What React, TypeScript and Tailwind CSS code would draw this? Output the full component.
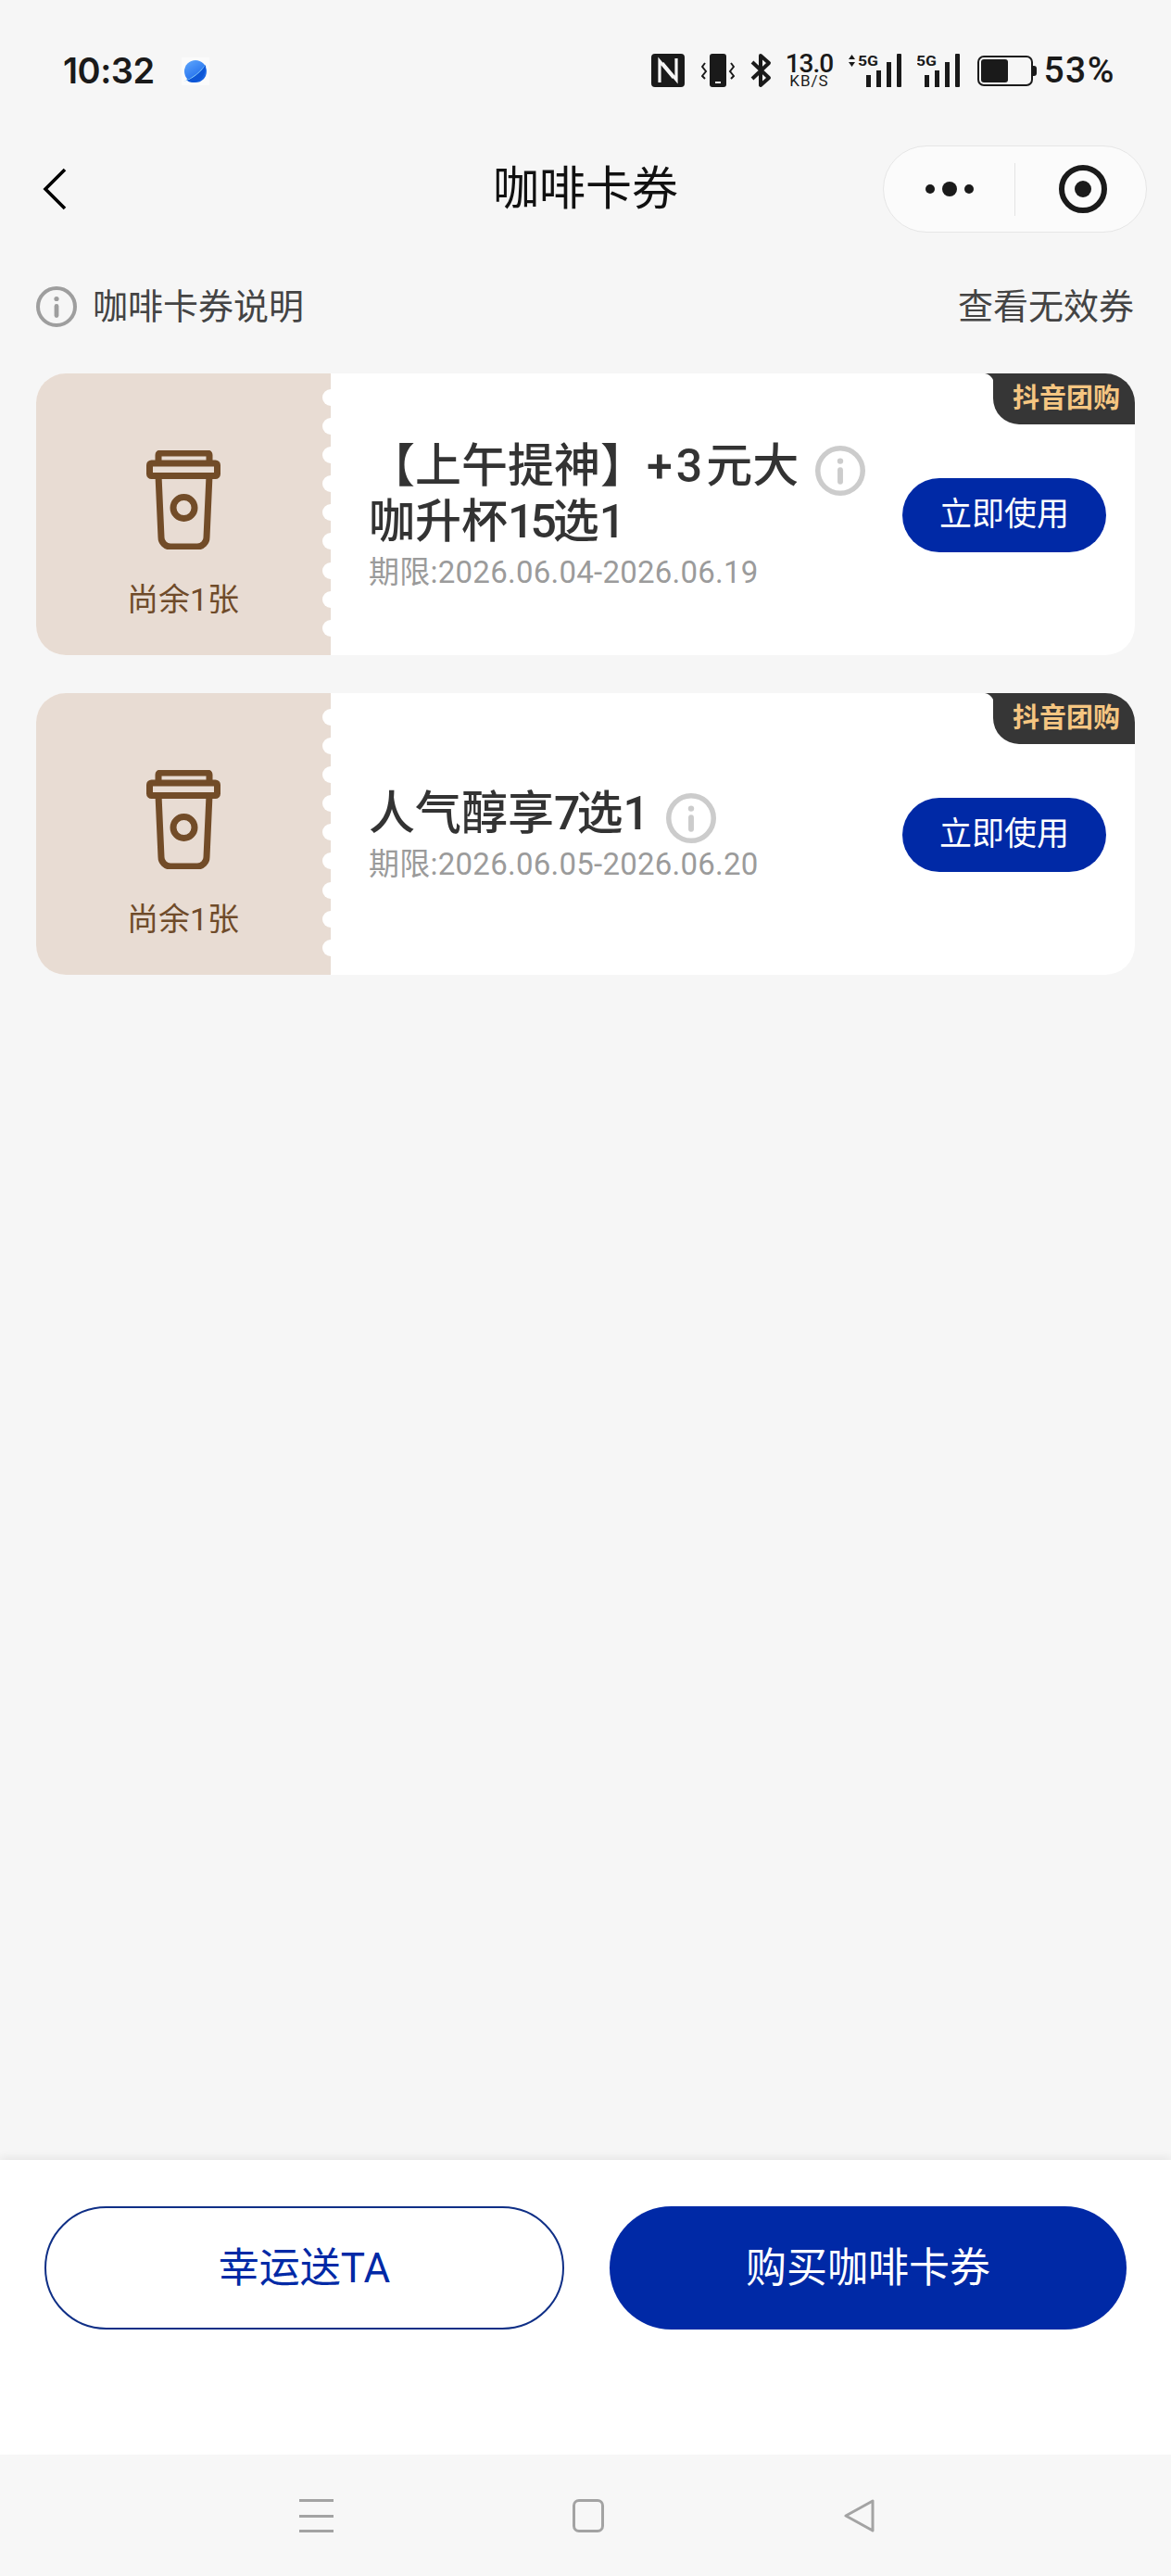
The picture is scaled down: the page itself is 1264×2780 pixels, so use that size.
import { useId, type ReactNode } from "react";

const BLUE = "bg-[#0029a6]";

function Planet() {
  const id = useId();
  return (
    <svg width="30" height="30" viewBox="0 0 30 30" className="ml-[29px] mt-[1px]">
      <defs>
        <linearGradient id={id} x1="0.2" y1="0" x2="0.8" y2="1">
          <stop offset="0" stopColor="#5aa2fb" />
          <stop offset="0.6" stopColor="#2f7bf0" />
          <stop offset="1" stopColor="#0a55d8" />
        </linearGradient>
      </defs>
      <rect x="-2" y="-2" width="34" height="34" rx="6" fill="#fbfbfb" />
      <circle cx="15" cy="15" r="12" fill={`url(#${id})`} />
      <path d="M5 24 C12 22 21 16 26 8 C27 17 21 27 12 27 C9 27 7 26 5 24Z" fill="#0d56d6" />
      <path d="M2 26 C10 24 20 18 27 6 C21 15 12 22 2 26Z" fill="#8fd4fb" />
    </svg>
  );
}

function NfcIcon() {
  return (
    <svg width="36" height="36" viewBox="0 0 36 36">
      <rect width="36" height="36" rx="4" fill="#1a1a1a" />
      <path d="M9 31V8L24 26M27 5V28L12 10" fill="none" stroke="#f6f6f6" strokeWidth="3.2" />
    </svg>
  );
}

function VibrateIcon() {
  return (
    <svg width="36" height="36" viewBox="0 0 36 36">
      <rect x="9" y="0" width="18" height="36" rx="3" fill="#1a1a1a" />
      <rect x="15" y="30" width="6" height="2" fill="#f6f6f6" />
      <path d="M4 10L1 14L5 19L1 24L4 27M32 10L35 14L31 19L35 24L32 27" fill="none" stroke="#1a1a1a" strokeWidth="2" />
    </svg>
  );
}

function BluetoothIcon() {
  return (
    <svg width="23" height="38" viewBox="0 0 23 38">
      <path d="M2 10L20 27L11 35V3L20 11L2 28" fill="none" stroke="#1a1a1a" strokeWidth="4" strokeLinejoin="round" />
    </svg>
  );
}

function Signal({ arrows }: { arrows?: boolean }) {
  const ox = arrows ? 12 : 0;
  return (
    <svg width={arrows ? 59 : 47} height="36" viewBox={`0 0 ${arrows ? 59 : 47} 36`}>
      {arrows && <path d="M1 6L4.5 1L8 6ZM1 9L4.5 14L8 9Z" fill="#1a1a1a" />}
      <text x={ox - 1} y="13" fontSize="15" fontWeight="700" fill="#1a1a1a" fontFamily="Roboto, sans-serif" textLength="22" lengthAdjust="spacingAndGlyphs">
        5G
      </text>
      <rect x={ox + 8} y="23" width="5" height="13" fill="#1a1a1a" />
      <rect x={ox + 19} y="18" width="5" height="18" fill="#1a1a1a" />
      <rect x={ox + 30} y="9" width="5" height="27" fill="#1a1a1a" />
      <rect x={ox + 41} y="0" width="5" height="36" rx="1" fill="#1a1a1a" />
    </svg>
  );
}

function Battery() {
  return (
    <svg width="64" height="33" viewBox="0 0 64 33">
      <rect x="1" y="1" width="58" height="31" rx="6" fill="none" stroke="#1a1a1a" strokeWidth="2" />
      <rect x="4" y="4" width="29" height="25" rx="3" fill="#1a1a1a" />
      <path d="M60 11h1a3 3 0 0 1 3 3v5a3 3 0 0 1-3 3h-1Z" fill="#1a1a1a" />
    </svg>
  );
}

function InfoIcon({ size, color, stroke }: { size: number; color: string; stroke: number }) {
  return (
    <svg width={size} height={size} viewBox="0 0 44 44" className="inline-block align-middle">
      <circle cx="22" cy="22" r={22 - stroke / 2} fill="none" stroke={color} strokeWidth={stroke} />
      <circle cx="22" cy="13.5" r="2.6" fill={color} />
      <rect x="19.6" y="19" width="4.8" height="15" rx="2.4" fill={color} />
    </svg>
  );
}

function CupIcon() {
  return (
    <svg width="80" height="107" viewBox="0 0 80 107" fill="none" stroke="#724c28" strokeWidth="7" strokeLinejoin="round">
      <path d="M13 14V5a2 2 0 0 1 2-2H66a2 2 0 0 1 2 2V14" />
      <rect x="3.5" y="14" width="73" height="13.5" rx="2" />
      <path d="M13 27L16 94a10 10 0 0 0 10 10H55a10 10 0 0 0 10-10L68 27" />
      <circle cx="40.5" cy="62" r="11.5" />
    </svg>
  );
}

function Scallops() {
  return (
    <div className="absolute right-[-9px] top-[17px] flex flex-col gap-[13.1px]">
      {Array.from({ length: 9 }).map((_, i) => (
        <div key={i} className="w-[18px] h-[18px] rounded-full bg-white" />
      ))}
    </div>
  );
}

// the digits in the titles are narrower than Roboto's
function Num({ children }: { children: ReactNode }) {
  return <span className="tracking-[-4px]">{children}</span>;
}

function CouponCard({ title, rest, date }: { title: ReactNode; rest?: ReactNode; date: string }) {
  return (
    <div className="relative flex h-[304px] rounded-[32px] overflow-hidden bg-white">
      <div className="relative w-[318px] shrink-0 bg-[#e8dcd3] flex flex-col items-center pt-[83px] pr-[1px]">
        <CupIcon />
        <div className="mt-[30px] text-[34px] leading-[48px] text-[#6f4b2a]">尚余1张</div>
        <Scallops />
      </div>
      <div className="flex-1 flex items-center pl-[41px]">
        <div className="w-[546px] mt-[5px]">
          <div className="text-[50px] leading-[60px] font-medium text-[#333333]">
            {title}
            <span className="inline-block ml-[18px] my-[-10px] align-middle relative top-[-2px]">
              <InfoIcon size={54} color="#cccccc" stroke={4.5} />
            </span>
            {rest && <br />}
            {rest}
          </div>
          <div className="text-[33px] leading-[50px] tracking-[0.25px] text-[#9b9b9b]">{date}</div>
        </div>
        <div className={`w-[220px] h-[80px] ml-[30px] mt-[2px] rounded-full ${BLUE} flex items-center justify-center text-[35px] text-white`}>
          立即使用
        </div>
      </div>
      <div className="absolute right-0 top-0 w-[153px] h-[55px] pl-[21px] flex items-center rounded-bl-[28px] bg-[#363636] text-[29px] font-bold text-[#f5c681]">
        <svg width="10" height="12" viewBox="0 0 10 12" className="absolute left-[-9px] top-0" fill="#363636">
          <path d="M0 0H10V12C10 6 6 1 0 0Z" />
        </svg>
        抖音团购
      </div>
    </div>
  );
}

export default function App() {
  return (
    <div className="w-[1264px] h-[2780px] flex flex-col bg-[#f6f6f6] font-['Roboto','Noto_Sans_CJK_SC',sans-serif]">
      <div className="h-[157px] flex justify-between items-start pt-[58px] pl-[68px] pr-[60px]">
        <div className="flex items-center h-[36px]">
          <span className="text-[38px] leading-[36px] font-semibold tracking-[-0.5px] text-[#1a1a1a] font-['Inter',sans-serif]">10:32</span>
          <Planet />
        </div>
        <div className="flex items-center h-[36px]">
          <NfcIcon />
          <div className="ml-[18px]"><VibrateIcon /></div>
          <div className="ml-[17px]"><BluetoothIcon /></div>
          <div className="ml-[15px] w-[50px] flex flex-col items-center text-[#1a1a1a]">
            <span className="text-[28px] leading-[22px] font-medium tracking-[-1px]">13.0</span>
            <span className="text-[17px] leading-[14px] tracking-[1px]">KB/S</span>
          </div>
          <div className="ml-[17px]"><Signal arrows /></div>
          <div className="ml-[16px]"><Signal /></div>
          <div className="ml-[18px]"><Battery /></div>
          <span className="ml-[7px] text-[39px] leading-[36px] font-medium tracking-[1.5px] text-[#1a1a1a]">53%</span>
        </div>
      </div>

      <div className="h-[94px] grid grid-cols-[1fr_auto_1fr] items-center">
        <svg width="26" height="46" viewBox="0 0 26 46" className="ml-[46px]" fill="none" stroke="#000000" strokeWidth="3.6">
          <path d="M24 2L3 23L24 44" />
        </svg>
        <div className="text-[50px] leading-[60px] text-[#111111]">咖啡卡券</div>
        <div className="justify-self-end mr-[26px] w-[285px] h-[94px] rounded-full bg-[#fbfbfb] border border-[#e6e6e6] flex items-center">
          <div className="w-[141px] flex items-center justify-center gap-[8px]">
            <div className="w-[10px] h-[10px] rounded-full bg-[#1a1a1a]" />
            <div className="w-[16px] h-[16px] rounded-full bg-[#1a1a1a]" />
            <div className="w-[10px] h-[10px] rounded-full bg-[#1a1a1a]" />
          </div>
          <div className="w-px h-[57px] bg-[#e4e4e4]" />
          <div className="flex-1 flex items-center justify-center pl-[5px]">
            <div className="w-[52px] h-[52px] rounded-full border-[6px] border-[#1a1a1a] flex items-center justify-center">
              <div className="w-[18px] h-[18px] rounded-full bg-[#1a1a1a]" />
            </div>
          </div>
        </div>
      </div>

      <div className="mt-[45px] h-[70px] pl-[39px] pr-[40px] flex items-center justify-between text-[38px] text-[#444444]">
        <div className="flex items-center gap-[17px]">
          <InfoIcon size={44} color="#9e9e9e" stroke={4} />
          <span>咖啡卡券说明</span>
        </div>
        <span>查看无效券</span>
      </div>

      <div className="mt-[37px] px-[39px] flex flex-col gap-[41px]">
        <CouponCard
          title={<>【上午提神】<span className="tracking-[4px]">+3</span>元大</>}
          rest={<>咖升杯<Num>15</Num>选1</>}
          date="期限:2026.06.04-2026.06.19"
        />
        <CouponCard
          title={<>人气醇享<Num>7</Num>选1</>}
          date="期限:2026.06.05-2026.06.20"
        />
      </div>

      <div className="flex-1" />

      <div className="h-[318px] bg-white shadow-[0_-2px_10px_rgba(0,0,0,0.08)] pt-[50px] pl-[48px] pr-[48px] flex justify-between items-start">
        <div className="w-[561px] h-[133px] rounded-full border-2 border-[#0f2f86] flex items-center justify-center text-[44px] text-[#0029a6]">
          幸运送TA
        </div>
        <div className={`w-[558px] h-[133px] rounded-full ${BLUE} flex items-center justify-center text-[44px] text-white`}>
          购买咖啡卡券
        </div>
      </div>

      <div className="h-[131px] bg-[#f7f7f7] flex justify-center items-start pt-[48px] gap-[258px] pl-[2px]">
        <div className="w-[37px] h-[36px] flex flex-col justify-between">
          <div className="h-[3px] bg-[#a3a3a3]" />
          <div className="h-[3px] bg-[#a3a3a3]" />
          <div className="h-[3px] bg-[#a3a3a3]" />
        </div>
        <div className="w-[34px] h-[36px] rounded-[7px] border-[3px] border-[#a3a3a3]" />
        <svg width="34" height="36" viewBox="0 0 34 36" fill="none" stroke="#a3a3a3" strokeWidth="3" strokeLinejoin="round">
          <path d="M32 2V34L3 18Z" />
        </svg>
      </div>
    </div>
  );
}
